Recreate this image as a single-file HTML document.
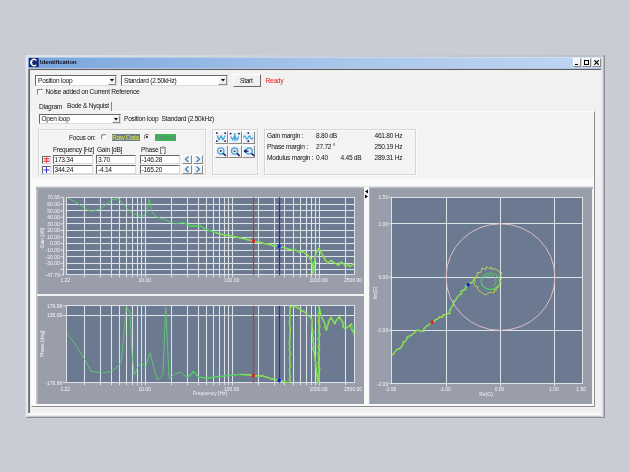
<!DOCTYPE html>
<html><head><meta charset="utf-8"><title>Identification</title>
<style>
*{box-sizing:border-box;margin:0;padding:0}
html,body{width:630px;height:472px;overflow:hidden;background:#c9ccd5}
body{will-change:transform;-webkit-font-smoothing:antialiased}
body{font-family:"Liberation Sans",sans-serif;font-size:6.6px;letter-spacing:-0.26px;color:#111;position:relative}
.a{position:absolute}
.t{position:absolute;white-space:nowrap;line-height:8px}
.inp{position:absolute;background:#fff;border:1px solid #66676c;border-right-color:#dcdcdc;border-bottom-color:#dcdcdc;font-size:6.6px;line-height:7px;padding:0 0 0 1px;white-space:nowrap;overflow:hidden}
.grp{position:absolute;border:1px solid #d6d6d6;box-shadow:inset 1px 1px 0 #fbfbfb,1px 1px 0 #fbfbfb}
.btn{position:absolute;background:#f0f0f0;border:1px solid #fff;border-right-color:#8a8a8a;border-bottom-color:#8a8a8a}
</style></head><body>
<!-- window frame -->
<div class="a" style="left:25px;top:55px;width:580px;height:363px;background:#d3d6dc"></div>
<div class="a" style="left:26px;top:55px;width:579px;height:363px;background:#e6e8ec;border-right:1px solid #8c8f96;border-bottom:1px solid #8c8f96"></div>
<div class="a" style="left:26px;top:55px;width:578px;height:2px;background:linear-gradient(90deg,#e2e4e9,#c6c9cf 60%,#bfc2c8)"></div>
<div class="a" style="left:28px;top:413px;width:575px;height:4px;background:linear-gradient(180deg,#fdfdfd,#fafafa 50%,#dcdde0 75%,#a3a6ac)"></div>
<div class="a" style="left:601px;top:57px;width:3px;height:360px;background:linear-gradient(90deg,#f2f2f3,#dcdee2 50%,#a9acb2)"></div>
<div class="a" style="left:28px;top:57px;width:574px;height:1px;background:linear-gradient(90deg,#a8c4e6 0%,#c6d7ee 50%,#d4e2f2 100%)"></div>
<div class="a" style="left:28px;top:58px;width:574px;height:10px;background:linear-gradient(90deg,#78a5dc 0%,#a6c4ea 50%,#bfd6f1 100%)"></div>
<div class="a" style="left:28px;top:68px;width:574px;height:1px;background:#b9c6d8"></div>
<div class="a" style="left:28px;top:69px;width:573px;height:1px;background:#5c5d63"></div>
<div class="a" style="left:28px;top:69px;width:1px;height:344px;background:#88898e"></div>
<div class="a" style="left:29px;top:69px;width:1px;height:344px;background:#66676c"></div>
<div class="a" style="left:30px;top:70px;width:571px;height:343px;background:#f1f1f1"></div>
<!-- title icon + text -->
<svg class="a" style="left:28.500px;top:58px" width="10" height="9" viewBox="0 0 10 9"><rect width="9.700" height="9" fill="#17246e"/><path d="M7.200 2.300A3.100 3.100 0 1 0 7.200 6.700" fill="none" stroke="#fff" stroke-width="1.300"/><path d="M3.200 2.500A3.300 3.300 0 0 0 3.200 6.500" fill="none" stroke="#fff" stroke-width="1.200"/><circle cx="7.300" cy="2.300" r="0.900" fill="#5aa0e8"/></svg>
<div class="t" style="left:40px;top:58.300px;font-weight:bold;font-size:5.900px;color:#0a0a18;letter-spacing:0">Identification</div>
<!-- window buttons -->
<div class="btn" style="left:573px;top:58px;width:8px;height:9px"></div>
<div class="a" style="left:575px;top:64px;width:3px;height:1px;background:#000"></div>
<div class="btn" style="left:582px;top:58px;width:9px;height:9px"></div>
<div class="a" style="left:584px;top:59.500px;width:5px;height:5px;border:1px solid #000;border-top-width:1.500px"></div>
<div class="btn" style="left:592px;top:58px;width:9px;height:9px"></div>
<svg class="a" style="left:594px;top:60px" width="5" height="5" viewBox="0 0 5 5"><path d="M0.300 0.300L4.700 4.700M4.700 0.300L0.300 4.700" stroke="#000" stroke-width="1.200"/></svg>

<!-- row 1 -->
<div class="inp" style="left:35px;top:75px;width:82px;height:10.500px;padding-left:2px;line-height:9px">Position loop</div>
<div class="btn" style="left:108px;top:76px;width:8px;height:9px"></div>
<svg class="a" style="left:110px;top:79px" width="4" height="3"><path d="M0 0h4L2 2.500z" fill="#000"/></svg>
<div class="inp" style="left:121px;top:75px;width:107px;height:11px;padding-left:2px;line-height:9px">Standard (2.50kHz)</div>
<div class="btn" style="left:218px;top:76px;width:9px;height:9px"></div>
<svg class="a" style="left:220.500px;top:79px" width="4" height="3"><path d="M0 0h4L2 2.500z" fill="#000"/></svg>
<div class="btn" style="left:233px;top:74px;width:28px;height:13px;border-right-color:#6a6a6a;border-bottom-color:#6a6a6a"></div>
<div class="t" style="left:240px;top:76.500px">Start</div>
<div class="t" style="left:265.500px;top:76.500px;color:#e01818">Ready</div>
<!-- checkbox -->
<div class="a" style="left:37px;top:89px;width:6px;height:6px;background:#fff;border:1px solid #808080;border-right-color:#e8e8e8;border-bottom-color:#e8e8e8"></div>
<div class="t" style="left:45.500px;top:88px">Noise added on Current Reference</div>
<!-- tabs -->
<div class="t" style="left:39px;top:103.200px">Diagram</div>
<div class="a" style="left:64px;top:102px;width:48px;height:9px;background:#f2f2f2;border-right:1px solid #858589"></div>
<div class="t" style="left:67px;top:102.200px">Bode &amp; Nyquist</div>
<!-- tab pane -->
<div class="a" style="left:31px;top:111px;width:564px;height:296px;border:1px solid #fbfbfb;border-right-color:#8e8e92;border-bottom-color:#8e8e92;background:#f3f3f3"></div>
<div class="a" style="left:32px;top:111px;width:79px;height:1px;background:#f2f2f2"></div>
<div class="inp" style="left:38.500px;top:114px;width:82px;height:10px;padding-left:2px;line-height:8px">Open loop</div>
<div class="btn" style="left:111.500px;top:115px;width:8px;height:8px"></div>
<svg class="a" style="left:113.500px;top:117.500px" width="4" height="3"><path d="M0 0h4L2 2.500z" fill="#000"/></svg>
<div class="t" style="left:124px;top:114.500px">Position loop&nbsp; Standard (2.50kHz)</div>

<!-- group 1 -->
<div class="grp" style="left:38px;top:129px;width:168px;height:46px"></div>
<div class="t" style="left:69px;top:133.500px">Focus on:</div>
<div class="a" style="left:101px;top:134px;width:6px;height:6px;border-radius:50%;background:#fff;border:1px solid #808080;border-right-color:#eee;border-bottom-color:#eee"></div>
<div class="t" style="left:111.500px;top:134px;height:7px;width:28px;background:#6f7b8e;color:#dcea44;text-align:center;line-height:7px">Raw Data</div>
<div class="a" style="left:144px;top:134px;width:6px;height:6px;border-radius:50%;background:#fff;border:1px solid #808080;border-right-color:#eee;border-bottom-color:#eee"></div>
<div class="a" style="left:146px;top:136px;width:2px;height:2px;border-radius:50%;background:#000"></div>
<div class="t" style="left:155px;top:134px;height:7px;width:21px;background:#3fb856;color:#5f8078;text-align:center;line-height:7px;font-size:6.500px">Filtered</div>
<div class="t" style="left:53px;top:146px">Frequency [Hz]</div>
<div class="t" style="left:97px;top:146px">Gain [dB]</div>
<div class="t" style="left:141px;top:146px">Phase [°]</div>
<div class="inp" style="left:42px;top:156px;width:9px;height:8px"></div>
<svg class="a" style="left:43px;top:157px" width="7" height="6" viewBox="0 0 7 6"><path d="M3.500 0V6M0.500 1.500H6.500M0.500 3H6.500M0.500 4.500H6.500" stroke="#e03030" stroke-width="0.800" fill="none"/></svg>
<div class="inp" style="left:42px;top:165.500px;width:9px;height:8px"></div>
<svg class="a" style="left:43px;top:166.500px" width="7" height="6" viewBox="0 0 7 6"><path d="M3.500 0V6M0.500 3H6.500" stroke="#2020d0" stroke-width="0.900" fill="none"/></svg>
<div class="inp" style="left:52.500px;top:155px;width:40px;height:9px">173.34</div>
<div class="inp" style="left:96px;top:155px;width:40px;height:9px">3.70</div>
<div class="inp" style="left:139.500px;top:155px;width:40px;height:9px">-146.28</div>
<div class="inp" style="left:52.500px;top:165px;width:40px;height:8.500px">344.24</div>
<div class="inp" style="left:96px;top:165px;width:40px;height:8.500px">-4.14</div>
<div class="inp" style="left:139.500px;top:165px;width:40px;height:8.500px">-165.20</div>
<div class="btn" style="left:182px;top:154.500px;width:10px;height:9.500px"></div>
<div class="btn" style="left:193px;top:154.500px;width:10px;height:9.500px"></div>
<div class="btn" style="left:182px;top:164.500px;width:10px;height:9.500px"></div>
<div class="btn" style="left:193px;top:164.500px;width:10px;height:9.500px"></div>
<svg class="a" style="left:182px;top:154px" width="22" height="20" viewBox="0 0 22 20"><path d="M6.500 2.500L3.500 5.200L6.500 8M14.500 2.500L17.500 5.200L14.500 8M6.500 12.500L3.500 15.200L6.500 18M14.500 12.500L17.500 15.200L14.500 18" stroke="#1a78c8" stroke-width="1.100" fill="none"/></svg>

<!-- toolbar group -->
<div class="grp" style="left:212px;top:128.500px;width:46px;height:46px"></div>
<div class="btn" style="left:215px;top:131px;width:13px;height:13px"></div>
<div class="btn" style="left:228px;top:131px;width:13.500px;height:13px"></div>
<div class="btn" style="left:241.500px;top:131px;width:13.500px;height:13px"></div>
<div class="btn" style="left:215px;top:144.500px;width:13px;height:13.500px"></div>
<div class="btn" style="left:228px;top:144.500px;width:13.500px;height:13.500px"></div>
<div class="btn" style="left:241.500px;top:144.500px;width:13.500px;height:13.500px"></div>
<svg class="a" style="left:215px;top:131px" width="40" height="27" viewBox="0 0 40 27">
<g fill="none" stroke="#45a6e2" stroke-width="1.300" stroke-linejoin="round"><path d="M2.300 4.500L4 9L6 4.800L8 9L10.200 4.500"/><path d="M15.800 5.500L17.600 9L19.800 4.500L22 9L23.800 5.500M19.800 2V10.500"/><path d="M28.400 6.500q1.200-3 2.400 0t2.400 0t2.400 0t2.400 0"/></g>
<g fill="#141a6a"><circle cx="1.800" cy="2.100" r="0.950"/><circle cx="10.100" cy="2.100" r="0.950"/><circle cx="1.800" cy="10.100" r="0.950"/><circle cx="10.100" cy="10.100" r="0.950"/>
<circle cx="15.600" cy="2.600" r="0.950"/><circle cx="24" cy="2.600" r="0.950"/>
<circle cx="33.300" cy="2.100" r="0.950"/><circle cx="33.300" cy="10.300" r="0.950"/></g>
<g fill="none" stroke="#45a6e2" stroke-width="1.300"><circle cx="5.800" cy="20" r="3.100"/><circle cx="19.600" cy="20.100" r="3.100"/><circle cx="34.200" cy="20.100" r="3.100"/></g>
<g stroke="#141a6a" stroke-width="1.500" fill="none"><path d="M8.200 22.400L10.800 24.800M22 22.500L24.600 24.900M36.600 22.500L39.200 24.900"/><path d="M18.600 20.100h2M29.300 20.100h4.200M30.800 18.600l-1.500 1.500l1.500 1.500" stroke-width="1.100"/></g>
<circle cx="5.800" cy="20" r="0.900" fill="#141a6a"/>
</svg>

<!-- margins group -->
<div class="grp" style="left:264px;top:128.500px;width:151.500px;height:46px"></div>
<div class="t" style="left:267px;top:132px">Gain margin :</div>
<div class="t" style="left:267px;top:142.500px">Phase margin :</div>
<div class="t" style="left:267px;top:153.500px">Modulus margin :</div>
<div class="t" style="left:316px;top:132px">8.80 dB</div>
<div class="t" style="left:316px;top:142.500px">27.72 °</div>
<div class="t" style="left:316px;top:153.500px">0.40</div>
<div class="t" style="left:340.500px;top:153.500px">4.45 dB</div>
<div class="t" style="left:374.500px;top:132px">461.80 Hz</div>
<div class="t" style="left:374.500px;top:142.500px">250.19 Hz</div>
<div class="t" style="left:374.500px;top:153.500px">289.31 Hz</div>

<!-- light band + plot area -->
<div class="a" style="left:32px;top:178px;width:562px;height:228px;background:#fafafa"></div>
<div class="a" style="left:36px;top:186px;width:557px;height:218px;background:#f0f1f3;border-left:1px solid #c4c5c9"></div>
<div class="a" style="left:36px;top:186px;width:557px;height:1px;background:#e2e3e6"></div>
<div class="a" style="left:36px;top:187px;width:557px;height:1px;background:#bdbfc4"></div>
<div class="a" style="left:36px;top:188px;width:557px;height:1px;background:#a4a7af"></div>
<div class="a" style="left:37px;top:189px;width:327px;height:104.500px;background:#9a9eaa;border-left:1px solid #b4b7bf"></div>
<div class="a" style="left:37px;top:296px;width:327px;height:107.500px;background:#9a9eaa;border-left:1px solid #b4b7bf"></div>
<div class="a" style="left:364px;top:187px;width:5px;height:217px;background:#fafafa"></div>
<div class="a" style="left:369px;top:189px;width:223px;height:214.500px;background:#9a9eaa;border-left:1px solid #b4b7bf"></div>
<svg class="a" style="left:364px;top:188.700px" width="5" height="10" viewBox="0 0 5 10"><path d="M4 0.500L1 2.500L4 4.500zM1 5.500L4 7.500L1 9.500z" fill="#000"/></svg>
<svg class="a" style="left:0;top:0;font-family:'Liberation Sans',sans-serif;letter-spacing:0" width="630" height="472" viewBox="0 0 630 472">
<rect x="66.3" y="197.3" width="287.8" height="77.6" fill="#6b7a90"/>
<path d="M84.5 196.8V277.4M100.5 196.8V277.4M111.5 196.8V277.4M119.5 196.8V277.4M126.5 196.8V277.4M132.5 196.8V277.4M137.5 196.8V277.4M141.5 196.8V277.4M145.5 196.8V277.4M171.5 196.8V277.4M187.5 196.8V277.4M198.5 196.8V277.4M206.5 196.8V277.4M213.5 196.8V277.4M219.5 196.8V277.4M224.5 196.8V277.4M228.5 196.8V277.4M232.5 196.8V277.4M258.5 196.8V277.4M274.5 196.8V277.4M284.5 196.8V277.4M293.5 196.8V277.4M300.5 196.8V277.4M306.5 196.8V277.4M311.5 196.8V277.4M315.5 196.8V277.4M319.5 196.8V277.4M345.5 196.8V277.4" stroke="#fff" stroke-opacity="0.06" stroke-width="2" fill="none"/>
<path d="M84.5 196.8V277.4M100.5 196.8V277.4M111.5 196.8V277.4M119.5 196.8V277.4M126.5 196.8V277.4M132.5 196.8V277.4M137.5 196.8V277.4M141.5 196.8V277.4M145.5 196.8V277.4M171.5 196.8V277.4M187.5 196.8V277.4M198.5 196.8V277.4M206.5 196.8V277.4M213.5 196.8V277.4M219.5 196.8V277.4M224.5 196.8V277.4M228.5 196.8V277.4M232.5 196.8V277.4M258.5 196.8V277.4M274.5 196.8V277.4M284.5 196.8V277.4M293.5 196.8V277.4M300.5 196.8V277.4M306.5 196.8V277.4M311.5 196.8V277.4M315.5 196.8V277.4M319.5 196.8V277.4M345.5 196.8V277.4" stroke="#dde1e8" stroke-width="1" fill="none"/>
<path d="M66.3 204.5H354.1M66.3 210.5H354.1M66.3 217.5H354.1M66.3 223.5H354.1M66.3 230.5H354.1M66.3 237.5H354.1M66.3 243.5H354.1M66.3 250.5H354.1M66.3 256.5H354.1M66.3 263.5H354.1M66.3 269.5H354.1M60.3 269.5H63.7" stroke="#fff" stroke-opacity="0.06" stroke-width="2" fill="none"/>
<path d="M66.3 204.5H354.1M66.3 210.5H354.1M66.3 217.5H354.1M66.3 223.5H354.1M66.3 230.5H354.1M66.3 237.5H354.1M66.3 243.5H354.1M66.3 250.5H354.1M66.3 256.5H354.1M66.3 263.5H354.1M66.3 269.5H354.1M60.3 269.5H63.7" stroke="#dde1e8" stroke-width="1" fill="none"/>
<rect x="66.5" y="197.5" width="288.0" height="77.0" fill="none" stroke="#dde1e8" stroke-width="1"/>
<path d="M253.5 197.3V274.9" stroke="#d63030" stroke-width="1.2"/>
<path d="M279.5 197.3V274.9" stroke="#2030d8" stroke-width="1.2"/>
<polyline points="67.1,197.7 77.1,202.9 87.1,210.0 92.9,211.1 101.4,208.6 111.4,200.0 118.6,198.6 124.3,205.7 132.9,213.7 142.9,216.6 147.1,211.4 149.1,199.4 152.0,211.4 155.7,216.6 165.7,220.0 174.3,223.7 184.3,222.9 191.4,226.3 200.0,225.7 204.3,228.6 218.6,233.7 232.9,236.3 253.1,240.9 264.3,243.4 279.2,246.5 285.1,247.9 292.7,249.8 299.1,251.1 304.2,252.4 307.4,254.9 310.5,258.7 312.4,263.2 313.3,274.5 314.1,263.2 316.3,253.0 318.8,247.9 322.0,253.6 325.2,259.4 327.7,262.9 331.5,260.0 334.7,263.2 338.5,265.5 341.7,261.9 344.9,265.1 350.0,266.7 353.5,263.2" fill="none" stroke="#5ad06a" stroke-width="0.9" stroke-linejoin="round"/>
<polyline points="184.3,222.9 191.4,226.3 200.0,225.7 204.3,228.6 218.6,233.7 232.9,236.3 253.1,240.9 264.3,243.4 279.2,246.5 285.1,247.9 292.7,249.8 299.1,251.1 304.2,252.4 307.4,254.9 310.5,258.7 312.4,263.2 313.3,274.5 314.1,263.2 316.3,253.0 318.8,247.9 322.0,253.6 325.2,259.4 327.7,262.9 331.5,260.0 334.7,263.2 338.5,265.5 341.7,261.9 344.9,265.1 350.0,266.7 353.5,263.2" fill="none" stroke="#52d25e" stroke-width="1.4" stroke-linejoin="round"/>
<polyline points="215.5,232.5 217.1,232.9 218.6,233.5 220.1,234.2 221.8,234.3 223.3,234.8 224.9,235.3 226.5,235.6 228.2,234.9 229.7,235.9 231.4,235.3 232.9,236.3 234.4,237.4 236.3,237.0 238.0,237.3 239.6,237.9 241.3,238.2 243.0,238.6 244.8,238.7 246.3,239.8 248.0,240.1 249.8,240.0 251.4,240.7 253.0,241.2 254.6,241.7 256.3,241.8 257.8,242.3 259.5,242.2 261.2,242.2 262.8,242.8 264.2,243.9 265.9,244.2 267.6,244.2 269.3,244.2 270.9,244.9 272.4,246.0 274.1,246.1 276.0,245.5 277.5,246.1 279.4,245.8 281.3,246.4 283.1,247.5 285.1,247.9 286.9,248.9 288.7,249.5 290.7,249.8 292.6,250.5 294.4,249.8 296.0,249.8 297.4,251.1 298.7,252.6 300.7,251.7 302.7,251.3 304.1,252.5 305.3,254.3 307.9,254.5 308.0,256.5 309.8,257.2 309.8,259.0 310.7,260.4 311.6,261.8 311.1,263.3 312.8,264.8 313.1,266.4 311.6,268.1 313.5,269.6 311.7,271.4 313.2,272.9 312.6,274.5 313.4,272.9 313.6,271.3 313.8,269.7 313.6,268.0 314.6,266.5 312.5,264.7 313.8,263.1 314.3,261.5 316.0,260.0 314.0,257.8 315.4,256.4 315.2,254.5 315.9,252.8 317.5,251.5 318.2,249.7 318.0,248.4 319.9,249.1 320.2,250.8 320.5,252.6 321.5,253.9 323.0,254.9 322.9,256.9 324.9,257.7 324.2,260.1 326.4,261.2 327.7,262.8 329.7,261.6 331.1,260.4 332.2,262.5 334.8,263.1 336.7,264.1 338.8,265.8 339.1,263.9 339.7,262.3 341.3,262.3 343.5,263.3 344.7,265.9 346.8,264.9 348.9,264.1 350.1,266.8 351.2,265.6 353.2,265.2 353.5,263.2" fill="none" stroke="#c8e848" stroke-width="0.85" opacity="0.9"/>
<circle cx="253.4" cy="240.9" r="1.7" fill="#e02020"/>
<circle cx="279.2" cy="246.3" r="1.7" fill="#1020e0"/>
<path d="M63.6 197.3V274.9" stroke="#eef0f3" stroke-width="0.9"/>
<g font-size="5" fill="#f4f5f7" text-anchor="end">
<text x="59.8" y="199.1">70.66</text>
<path d="M60.3 197.3H63.7" stroke="#eef0f3" stroke-width="0.8"/>
<text x="59.8" y="206.1">60.00</text>
<path d="M60.3 204.3H63.7" stroke="#eef0f3" stroke-width="0.8"/>
<text x="59.8" y="212.6">50.00</text>
<path d="M60.3 210.8H63.7" stroke="#eef0f3" stroke-width="0.8"/>
<text x="59.8" y="219.2">40.00</text>
<path d="M60.3 217.4H63.7" stroke="#eef0f3" stroke-width="0.8"/>
<text x="59.8" y="225.7">30.00</text>
<path d="M60.3 223.9H63.7" stroke="#eef0f3" stroke-width="0.8"/>
<text x="59.8" y="232.3">20.00</text>
<path d="M60.3 230.5H63.7" stroke="#eef0f3" stroke-width="0.8"/>
<text x="59.8" y="238.8">10.00</text>
<path d="M60.3 237.0H63.7" stroke="#eef0f3" stroke-width="0.8"/>
<text x="59.8" y="245.4">0.00</text>
<path d="M60.3 243.6H63.7" stroke="#eef0f3" stroke-width="0.8"/>
<text x="59.8" y="251.9">-10.00</text>
<path d="M60.3 250.1H63.7" stroke="#eef0f3" stroke-width="0.8"/>
<text x="59.8" y="258.5">-20.00</text>
<path d="M60.3 256.7H63.7" stroke="#eef0f3" stroke-width="0.8"/>
<text x="59.8" y="265.0">-30.00</text>
<path d="M60.3 263.2H63.7" stroke="#eef0f3" stroke-width="0.8"/>
<text x="59.8" y="276.7">-47.79</text>
<path d="M60.3 274.9H63.7" stroke="#eef0f3" stroke-width="0.8"/>
<text x="62.3" y="307.7">179.96</text>
<path d="M62.6 305.9H66.3" stroke="#eef0f3" stroke-width="0.8"/>
<text x="62.3" y="317.3">135.00</text>
<path d="M62.6 315.5H66.3" stroke="#eef0f3" stroke-width="0.8"/>
<text x="62.3" y="384.5">-179.96</text>
<path d="M62.6 382.7H66.3" stroke="#eef0f3" stroke-width="0.8"/>
</g>
<g font-size="5" fill="#f4f5f7" text-anchor="middle">
<text x="65.3" y="282.2">1.22</text>
<text x="144.7" y="282.2">10.00</text>
<text x="231.6" y="282.2">100.00</text>
<text x="318.5" y="282.2">1000.00</text>
<text x="353.1" y="282.2">2500.00</text>
<text x="65.3" y="390.8">1.22</text>
<text x="144.7" y="390.8">10.00</text>
<text x="231.6" y="390.8">100.00</text>
<text x="318.5" y="390.8">1000.00</text>
<text x="353.1" y="390.8">2500.00</text>
<text x="210" y="394.8">Frequency [Hz]</text>
<text transform="translate(44,238) rotate(-90)">Gain [dB]</text>
<text transform="translate(44,344) rotate(-90)">Phase [deg]</text>
</g>
<rect x="66.3" y="305.9" width="287.8" height="76.8" fill="#6b7a90"/>
<path d="M84.5 305.4V385.2M100.5 305.4V385.2M111.5 305.4V385.2M119.5 305.4V385.2M126.5 305.4V385.2M132.5 305.4V385.2M137.5 305.4V385.2M141.5 305.4V385.2M145.5 305.4V385.2M171.5 305.4V385.2M187.5 305.4V385.2M198.5 305.4V385.2M206.5 305.4V385.2M213.5 305.4V385.2M219.5 305.4V385.2M224.5 305.4V385.2M228.5 305.4V385.2M232.5 305.4V385.2M258.5 305.4V385.2M274.5 305.4V385.2M284.5 305.4V385.2M293.5 305.4V385.2M300.5 305.4V385.2M306.5 305.4V385.2M311.5 305.4V385.2M315.5 305.4V385.2M319.5 305.4V385.2M345.5 305.4V385.2" stroke="#fff" stroke-opacity="0.06" stroke-width="2" fill="none"/>
<path d="M84.5 305.4V385.2M100.5 305.4V385.2M111.5 305.4V385.2M119.5 305.4V385.2M126.5 305.4V385.2M132.5 305.4V385.2M137.5 305.4V385.2M141.5 305.4V385.2M145.5 305.4V385.2M171.5 305.4V385.2M187.5 305.4V385.2M198.5 305.4V385.2M206.5 305.4V385.2M213.5 305.4V385.2M219.5 305.4V385.2M224.5 305.4V385.2M228.5 305.4V385.2M232.5 305.4V385.2M258.5 305.4V385.2M274.5 305.4V385.2M284.5 305.4V385.2M293.5 305.4V385.2M300.5 305.4V385.2M306.5 305.4V385.2M311.5 305.4V385.2M315.5 305.4V385.2M319.5 305.4V385.2M345.5 305.4V385.2" stroke="#dde1e8" stroke-width="1" fill="none"/>
<path d="M66.3 315.5H354.1" stroke="#dde1e8" stroke-width="1"/>
<rect x="66.5" y="305.5" width="288.0" height="77.0" fill="none" stroke="#dde1e8" stroke-width="1"/>
<path d="M253.5 305.9V382.7" stroke="#d63030" stroke-width="1.2"/>
<path d="M279.5 305.9V382.7" stroke="#2030d8" stroke-width="1.2"/>
<polyline points="67.1,332.9 77.1,347.1 85.7,361.4 91.4,371.4 102.9,372.9 111.4,371.4 118.6,365.7 121.4,361.4 126.3,307.1 130.0,312.9 132.0,352.9 134.3,375.1 137.7,367.1 141.4,362.9 145.7,367.1 150.0,352.9 154.3,370.0 157.7,380.0 162.9,374.3 165.7,307.1 169.1,378.6 174.3,374.3 180.0,372.3 187.1,377.1 190.0,375.7 193.4,371.4 198.6,377.1 207.1,378.0 218.6,376.6 232.9,375.1 241.4,374.3 253.1,375.7 264.3,376.3 272.9,379.1 279.2,380.3 285.7,382.1 289.7,382.6 289.9,306.5 294.3,306.7 299.0,308.6 304.8,312.4 309.5,316.8 311.4,319.0 312.8,338.1 315.2,361.0 318.1,382.0 318.9,382.6 319.1,306.5 321.0,315.2 323.8,321.0 326.3,330.5 328.6,322.9 331.0,317.1 334.3,323.8 337.1,320.0 339.4,316.2 342.9,324.8 344.8,328.6 347.6,327.6 351.4,323.8 353.9,335.2" fill="none" stroke="#5ad06a" stroke-width="0.9" stroke-linejoin="round"/>
<polyline points="187.1,377.1 190.0,375.7 193.4,371.4 198.6,377.1 207.1,378.0 218.6,376.6 232.9,375.1 241.4,374.3 253.1,375.7 264.3,376.3 272.9,379.1 279.2,380.3 285.7,382.1 289.7,382.6 289.9,306.5 294.3,306.7 299.0,308.6 304.8,312.4 309.5,316.8 311.4,319.0 312.8,338.1 315.2,361.0 318.1,382.0 318.9,382.6 319.1,306.5 321.0,315.2 323.8,321.0 326.3,330.5 328.6,322.9 331.0,317.1 334.3,323.8 337.1,320.0 339.4,316.2 342.9,324.8 344.8,328.6 347.6,327.6 351.4,323.8 353.9,335.2" fill="none" stroke="#52d25e" stroke-width="1.3" stroke-linejoin="round"/>
<polyline points="241.4,374.5 243.0,374.9 244.8,374.3 246.4,374.9 248.1,374.9 249.9,374.4 251.4,375.4 253.1,375.3 254.7,376.1 256.3,375.8 257.9,375.9 259.5,375.4 261.1,376.2 262.7,375.4 264.3,376.4 265.8,377.5 267.9,376.9 269.3,378.4 271.0,379.2 272.9,379.0 274.4,379.9 276.0,379.7 277.7,379.8 279.5,379.3 281.0,380.2 282.7,380.4 283.7,382.9 285.7,382.2 287.7,382.3 288.9,382.6 290.7,381.0 289.1,379.4 290.5,377.7 290.3,376.1 289.8,374.5 289.4,372.9 289.7,371.3 289.0,369.6 290.1,368.0 290.7,366.4 290.2,364.8 290.3,363.2 289.4,361.6 289.9,359.9 289.2,358.3 289.5,356.7 290.2,355.1 291.2,353.5 289.8,351.8 289.8,350.2 288.7,348.6 289.9,347.0 289.3,345.4 289.0,343.7 289.0,342.1 289.9,340.5 289.6,338.9 290.2,337.3 289.7,335.6 289.8,334.0 290.6,332.4 290.3,330.8 290.3,329.2 290.7,327.6 290.0,325.9 289.3,324.3 289.4,322.7 289.0,321.1 290.1,319.5 289.6,317.8 290.2,316.2 290.3,314.6 289.4,313.0 290.0,311.4 290.6,309.7 289.9,308.1 289.9,307.0 292.1,306.5 294.5,306.2 295.9,307.2 297.8,306.9 298.8,309.0 300.6,309.3 301.5,311.2 303.8,310.8 304.7,312.5 305.8,313.7 307.2,314.5 308.2,315.9 309.9,316.5 312.1,318.9 312.4,320.7 312.0,322.4 312.3,324.2 311.8,326.0 312.3,327.7 312.6,329.4 312.8,331.1 313.7,332.8 312.8,334.6 312.4,336.4 313.7,338.0 313.1,339.7 312.7,341.4 313.8,343.0 313.4,344.7 313.9,346.2 312.2,348.1 313.1,349.6 313.4,351.3 314.8,352.8 314.1,354.5 314.8,356.1 314.6,357.8 315.4,359.3 315.1,361.0 315.9,362.5 315.5,364.3 314.7,366.0 317.0,367.3 317.2,369.0 316.2,370.7 316.2,372.4 317.2,373.9 316.8,375.6 317.1,377.2 317.3,378.8 316.9,380.5 318.4,381.6 319.4,382.6 319.0,381.0 318.4,379.4 319.3,377.7 318.0,376.1 317.9,374.5 319.7,372.9 318.2,371.3 320.1,369.6 319.7,368.0 318.6,366.4 318.3,364.8 317.4,363.2 318.9,361.6 317.8,359.9 320.0,358.3 317.8,356.7 319.0,355.1 317.1,353.5 318.7,351.8 319.9,350.2 318.7,348.6 318.4,347.0 318.7,345.4 319.3,343.7 319.6,342.1 318.8,340.5 317.6,338.9 319.2,337.3 319.7,335.6 320.6,334.0 319.1,332.4 319.2,330.8 318.7,329.2 319.6,327.6 320.3,325.9 318.4,324.3 319.1,322.7 318.3,321.1 318.6,319.5 318.9,317.8 319.4,316.2 318.5,314.6 318.9,313.0 320.0,311.4 319.4,309.7 319.6,308.1 318.8,306.6 319.6,308.2 319.6,310.0 319.9,311.8 320.6,313.5 320.4,315.5 321.7,316.6 321.8,318.4 323.1,319.6 323.3,321.1 324.7,322.5 325.0,324.1 325.9,325.5 324.6,327.6 325.5,329.0 326.4,330.5 327.3,328.7 326.9,326.5 328.1,324.8 328.3,322.8 328.1,320.4 330.0,319.0 331.6,316.8 330.9,319.2 333.2,320.2 333.9,321.9 334.9,324.2 335.7,321.9 336.2,319.5 338.4,318.2 340.0,316.0 338.9,318.4 341.6,319.3 342.0,321.1 344.2,322.3 343.4,324.6 342.5,327.4 344.8,328.5 347.0,327.0 349.0,326.5 350.0,324.9 351.4,323.8 349.7,325.9 350.5,327.4 351.2,329.0 351.5,330.6 353.9,331.8 355.2,333.2 353.9,335.2" fill="none" stroke="#c8e848" stroke-width="0.85" opacity="0.9"/>
<circle cx="253.4" cy="375.7" r="1.7" fill="#e02020"/>
<circle cx="279.2" cy="380.3" r="1.7" fill="#1020e0"/>
<rect x="391.7" y="197.1" width="190.5" height="186.7" fill="#6b7a90"/>
<path d="M446.5 197.1V386.3M500.5 197.1V386.3M554.5 197.1V386.3M391.7 223.5H582.2M391.7 277.5H582.2M391.7 330.5H582.2" stroke="#dde1e8" stroke-width="1" fill="none"/>
<rect x="391.5" y="197.5" width="191.0" height="186.0" fill="none" stroke="#dde1e8" stroke-width="1"/>
<ellipse cx="500.5" cy="277.1" rx="54.4" ry="53.3" fill="none" stroke="#dcbcc6" stroke-width="1"/>
<polyline points="392.2,355.2 397.3,349.4 400.8,347.1 405.5,340.1 411.3,335.4 417.1,330.1 423.0,330.8 426.5,326.1 431.8,322.6 438.1,318.4 445.1,315.1 449.8,313.3 450.9,307.4 454.4,301.6 459.1,295.8 463.8,290.0 468.4,285.3 473.1,280.6 476.6,274.8" fill="none" stroke="#4fd05e" stroke-width="1.3" stroke-linejoin="round"/>
<ellipse cx="490.4" cy="281.2" rx="9.4" ry="8.2" fill="none" stroke="#4fd05e" stroke-width="1.1"/>
<path d="M483.5 279.5C484.5 275.5 490 274 494 276.5C497 279 496.5 284 493 286" fill="none" stroke="#4fd05e" stroke-width="0.9"/>
<polyline points="392.0,355.0 393.6,354.3 394.1,352.7 395.0,351.5 395.7,350.0 397.2,349.2 399.0,349.5 399.8,348.2 401.6,347.6 401.8,346.1 402.7,345.0 403.3,343.7 402.7,341.6 405.4,341.7 405.8,340.5 406.9,339.5 406.9,337.0 408.0,336.1 409.6,335.7 411.0,335.1 412.5,334.7 413.2,333.6 414.5,333.1 414.8,331.4 416.3,331.2 417.1,330.5 418.6,329.7 419.9,332.0 421.5,331.1 423.9,331.4 423.4,329.3 424.2,328.1 425.4,327.1 426.4,326.0 428.1,325.7 429.3,324.5 430.3,323.1 431.3,321.9 432.8,321.4 434.9,321.8 435.2,319.5 437.0,319.4 438.3,318.7 438.9,316.5 440.9,317.1 442.8,317.5 442.9,314.1 445.0,314.8 446.6,314.4 448.0,313.2 450.2,313.4 450.0,311.8 449.1,310.1 451.4,309.0 451.4,307.7 452.3,306.7 453.4,305.7 453.3,304.1 453.8,302.8 453.5,300.9 455.8,300.8 455.9,298.9 456.9,297.9 457.3,296.2 458.4,295.3 459.7,294.3 461.9,294.2 460.5,291.2 461.8,290.3 464.0,290.2 465.6,290.0 466.0,288.5 465.3,286.0 465.9,284.7 468.6,285.5 468.9,283.9 469.6,282.7 471.8,283.1 472.9,282.2 473.2,280.7 474.0,279.6 474.8,278.5 476.4,277.9 476.4,276.2 476.9,275.1 477.9,274.2 477.4,272.0 480.2,272.9 480.9,271.7 481.4,270.7 482.0,268.0 483.8,268.7 485.6,269.5 486.3,266.7 488.2,267.6 489.4,268.9 491.1,267.0 492.1,269.8 493.6,269.1 495.1,268.7 496.2,269.2 497.2,270.3 498.7,270.8 499.3,272.5 501.7,272.4 501.6,273.9 500.4,275.4 501.5,276.7 502.4,278.0 501.0,279.2 500.0,280.4 500.9,282.5 501.1,284.2 499.4,285.1 498.8,286.6 497.9,287.7 495.9,287.5 496.5,290.1 494.0,289.6 494.7,292.1 493.1,293.0 491.3,292.2 489.8,292.3 488.6,293.0 487.3,293.9 486.0,294.5 484.8,295.0 483.8,293.8 482.3,293.5 481.3,292.3 480.3,291.3 478.9,290.8 478.3,289.6 477.4,288.6 477.9,286.7 475.9,286.3 474.6,285.5 473.9,284.1 474.3,282.6 475.3,281.3 474.3,279.7 474.7,278.3" fill="none" stroke="#d0e644" stroke-width="0.8"/>
<circle cx="432.1" cy="322.3" r="1.8" fill="#e02020"/>
<circle cx="468.2" cy="284.8" r="1.8" fill="#1020e0"/>
<g font-size="5" fill="#f4f5f7" text-anchor="end">
<text x="388.2" y="199.0">1.50</text>
<path d="M388.6 197.2H391.7" stroke="#eef0f3" stroke-width="0.8"/>
<text x="388.2" y="225.6">1.00</text>
<path d="M388.6 223.8H391.7" stroke="#eef0f3" stroke-width="0.8"/>
<text x="388.2" y="278.9">0.00</text>
<path d="M388.6 277.1H391.7" stroke="#eef0f3" stroke-width="0.8"/>
<text x="388.2" y="332.2">-1.00</text>
<path d="M388.6 330.4H391.7" stroke="#eef0f3" stroke-width="0.8"/>
<text x="388.2" y="385.5">-2.00</text>
<path d="M388.6 383.7H391.7" stroke="#eef0f3" stroke-width="0.8"/>
</g>
<g font-size="5" fill="#f4f5f7" text-anchor="middle">
<text x="390.7" y="390.7">-2.00</text>
<text x="445.1" y="390.7">-1.00</text>
<text x="499.5" y="390.7">0.00</text>
<text x="553.9" y="390.7">1.00</text>
<text x="581.1" y="390.7">1.50</text>
<text x="486" y="395.6">Re(G)</text>
<text transform="translate(376.5,293) rotate(-90)">Im(G)</text>
</g>
</svg>
</body></html>
